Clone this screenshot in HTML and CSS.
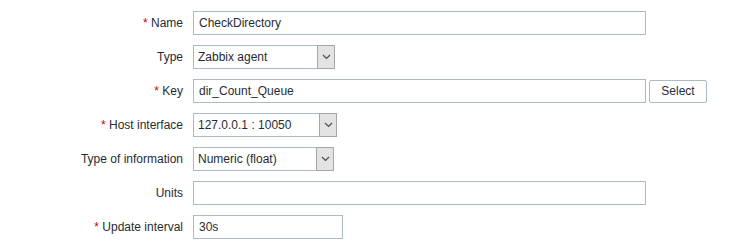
FILE: index.html
```html
<!DOCTYPE html>
<html>
<head>
<meta charset="UTF-8">
<title>Item</title>
<link rel="stylesheet" href="styles.css">
</head>
<body>
<form class="item-form">
	<label class="lbl"><span class="req">*</span> Name</label>
	<div class="field"><input class="txt wide" type="text" value="CheckDirectory"></div>

	<label class="lbl">Type</label>
	<div class="field">
		<div class="combo w-type"><span>Zabbix agent</span><i class="arrow"><svg width="9" height="6" viewBox="0 0 9 6"><path d="M1 1l3.5 3.5L8 1" fill="none" stroke="#4d4d4d" stroke-width="1.2"/></svg></i></div>
	</div>

	<label class="lbl"><span class="req">*</span> Key</label>
	<div class="field"><input class="txt wide" type="text" value="dir_Count_Queue"><button class="btn" type="button">Select</button></div>

	<label class="lbl"><span class="req">*</span> Host interface</label>
	<div class="field">
		<div class="combo w-host"><span>127.0.0.1 : 10050</span><i class="arrow"><svg width="9" height="6" viewBox="0 0 9 6"><path d="M1 1l3.5 3.5L8 1" fill="none" stroke="#4d4d4d" stroke-width="1.2"/></svg></i></div>
	</div>

	<label class="lbl">Type of information</label>
	<div class="field">
		<div class="combo w-info"><span>Numeric (float)</span><i class="arrow"><svg width="9" height="6" viewBox="0 0 9 6"><path d="M1 1l3.5 3.5L8 1" fill="none" stroke="#4d4d4d" stroke-width="1.2"/></svg></i></div>
	</div>

	<label class="lbl">Units</label>
	<div class="field"><input class="txt wide" type="text" value=""></div>

	<label class="lbl"><span class="req">*</span> Update interval</label>
	<div class="field"><input class="txt short" type="text" value="30s"></div>
</form>
</body>
</html>
```

FILE: styles.css
```css
html, body {
	margin: 0;
	padding: 0;
	background: #ffffff;
}
body {
	font-family: Arial, "Liberation Sans", sans-serif;
	font-size: 12px;
	color: #1f2c33;
}
.item-form {
	display: grid;
	grid-template-columns: 183px auto;
	column-gap: 10px;
	row-gap: 10px;
	padding-top: 11px;
}
.lbl {
	text-align: right;
	align-self: center;
	white-space: nowrap;
}
.req {
	color: #d40000;
}
.field {
	display: flex;
	align-items: center;
	height: 24px;
}
.txt {
	box-sizing: border-box;
	height: 24px;
	margin: 0;
	padding: 0 5px;
	border: 1px solid #acbbc2;
	background: #fff;
	font-family: inherit;
	font-size: 12px;
	color: #1f2c33;
	outline: none;
}
.wide {
	width: 453px;
}
.short {
	width: 150px;
}
.btn {
	box-sizing: border-box;
	height: 23px;
	width: 58px;
	margin: 0 0 0 3px;
	padding: 0;
	border: 1px solid #acbbc2;
	border-radius: 2px;
	background: #fff;
	font-family: inherit;
	font-size: 12px;
	color: #1f2c33;
}
.combo {
	box-sizing: border-box;
	display: flex;
	align-items: center;
	height: 24px;
	border: 1px solid #acbbc2;
	background: #fff;
	padding-left: 4px;
	position: relative;
}
.combo span {
	flex: 1;
	white-space: nowrap;
}
.w-type { width: 142px; }
.w-host { width: 144px; }
.w-info { width: 141px; }
.arrow {
	box-sizing: border-box;
	display: flex;
	align-items: center;
	justify-content: center;
	width: 18px;
	height: 24px;
	margin: -1px -1px -1px 0;
	border: 1px solid #a6a6a6;
	background: #e3e3e3;
}
```
